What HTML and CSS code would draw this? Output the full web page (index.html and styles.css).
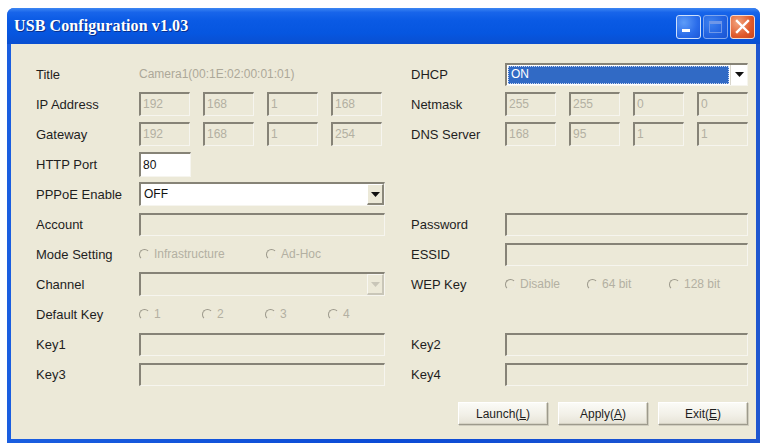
FILE: index.html
```html
<!DOCTYPE html>
<html>
<head>
<meta charset="utf-8">
<title>USB Configuration v1.03</title>
<link rel="stylesheet" href="styles.css">
</head>
<body>
<div class="window">
  <div class="titlebar">
    <span class="title">USB Configuration v1.03</span>
    <div class="caption-btns">
      <span class="cbtn cmin"><svg width="25" height="24" viewBox="0 0 25 24"><rect x="6" y="14" width="8" height="3" fill="#fff"/></svg></span>
      <span class="cbtn cmax"><svg width="25" height="24" viewBox="0 0 25 24"><rect x="6.5" y="6.5" width="12" height="11" fill="none" stroke="#6f97e8" stroke-width="1"/><rect x="6" y="6" width="13" height="3" fill="#6f97e8"/></svg></span>
      <span class="cbtn cclose"><svg width="25" height="24" viewBox="0 0 25 24"><path d="M7 6 L18 17 M18 6 L7 17" stroke="#fff" stroke-width="2.4" stroke-linecap="square"/></svg></span>
    </div>
  </div>
  <div class="client">
    <div class="form">
      <div class="row">
        <span class="lbl">Title</span>
        <span class="static">Camera1(00:1E:02:00:01:01)</span>
        <span></span>
        <span class="lbl">DHCP</span>
        <div class="combo focus">
          <span class="combo-val sel">ON</span>
          <span class="arrow white"><svg width="9" height="5" viewBox="0 0 9 5"><path d="M0 0 H9 L4.5 5 Z" fill="#111"/></svg></span>
        </div>
      </div>
      <div class="row">
        <span class="lbl">IP Address</span>
        <div class="quad"><span class="tb">192</span><span class="tb">168</span><span class="tb">1</span><span class="tb">168</span></div>
        <span></span>
        <span class="lbl">Netmask</span>
        <div class="quad"><span class="tb">255</span><span class="tb">255</span><span class="tb">0</span><span class="tb">0</span></div>
      </div>
      <div class="row">
        <span class="lbl">Gateway</span>
        <div class="quad"><span class="tb">192</span><span class="tb">168</span><span class="tb">1</span><span class="tb">254</span></div>
        <span></span>
        <span class="lbl">DNS Server</span>
        <div class="quad"><span class="tb">168</span><span class="tb">95</span><span class="tb">1</span><span class="tb">1</span></div>
      </div>
      <div class="row">
        <span class="lbl">HTTP Port</span>
        <div class="port-wrap"><span class="tb enabled port">80</span></div>
      </div>
      <div class="row">
        <span class="lbl">PPPoE Enable</span>
        <div class="combo">
          <span class="combo-val">OFF</span>
          <span class="arrow btnface"><svg width="9" height="5" viewBox="0 0 9 5"><path d="M0 0 H9 L4.5 5 Z" fill="#111"/></svg></span>
        </div>
      </div>
      <div class="row">
        <span class="lbl">Account</span>
        <span class="tb wide"></span>
        <span></span>
        <span class="lbl">Password</span>
        <span class="tb wide"></span>
      </div>
      <div class="row">
        <span class="lbl">Mode Setting</span>
        <div class="radios mode">
          <span class="radio"><span class="dot"></span>Infrastructure</span>
          <span class="radio"><span class="dot"></span>Ad-Hoc</span>
        </div>
        <span></span>
        <span class="lbl">ESSID</span>
        <span class="tb wide"></span>
      </div>
      <div class="row">
        <span class="lbl">Channel</span>
        <div class="combo disabled">
          <span class="combo-val"></span>
          <span class="arrow btnface dis"><svg width="9" height="5" viewBox="0 0 9 5"><path d="M0 0 H9 L4.5 5 Z" fill="#c9c6b8"/></svg></span>
        </div>
        <span></span>
        <span class="lbl">WEP Key</span>
        <div class="radios wep">
          <span class="radio"><span class="dot"></span>Disable</span>
          <span class="radio"><span class="dot"></span>64 bit</span>
          <span class="radio"><span class="dot"></span>128 bit</span>
        </div>
      </div>
      <div class="row">
        <span class="lbl">Default Key</span>
        <div class="radios keys">
          <span class="radio"><span class="dot"></span>1</span>
          <span class="radio"><span class="dot"></span>2</span>
          <span class="radio"><span class="dot"></span>3</span>
          <span class="radio"><span class="dot"></span>4</span>
        </div>
      </div>
      <div class="row">
        <span class="lbl">Key1</span>
        <span class="tb wide"></span>
        <span></span>
        <span class="lbl">Key2</span>
        <span class="tb wide"></span>
      </div>
      <div class="row">
        <span class="lbl">Key3</span>
        <span class="tb wide"></span>
        <span></span>
        <span class="lbl">Key4</span>
        <span class="tb wide"></span>
      </div>
    </div>
    <div class="actions">
      <button class="btn">Launch(<u>L</u>)</button>
      <button class="btn">Apply(<u>A</u>)</button>
      <button class="btn">Exit(<u>E</u>)</button>
    </div>
  </div>
</div>
</body>
</html>
```
FILE: styles.css
```css
html, body {
  margin: 0;
  padding: 0;
  background: #ffffff;
}
body {
  font-family: "Liberation Sans", Arial, sans-serif;
  font-size: 13px;
  color: #1c1c1c;
}
.window {
  margin: 8px 0 0 7px;
  width: 753px;
  height: 435px;
  display: flex;
  flex-direction: column;
  border-radius: 7px 7px 0 0;
  background: linear-gradient(90deg, #1a5ee0, #0b4bd6 50%, #1f56cf);
  overflow: hidden;
}
.titlebar {
  height: 36px;
  flex: none;
  display: flex;
  align-items: center;
  justify-content: space-between;
  padding: 0 5px 0 7px;
  background: linear-gradient(180deg, #3d86f2 0%, #1865ea 12%, #0a5ae4 35%, #0656e0 70%, #0a4fd0 100%);
}
.title {
  font-family: "Liberation Serif", "Times New Roman", serif;
  font-weight: bold;
  font-size: 16px;
  color: #ffffff;
  text-shadow: 1px 1px 0 #0a2f8c;
  letter-spacing: 0.1px;
}
.caption-btns {
  display: flex;
  gap: 2px;
  margin-top: 2px;
}
.cbtn {
  width: 25px;
  height: 24px;
  box-sizing: border-box;
  border: 1px solid #ffffff;
  border-radius: 3px;
  display: block;
  overflow: hidden;
}
.cbtn svg {
  display: block;
  margin: -1px;
}
.cmin {
  background: radial-gradient(circle at 30% 30%, #5d9cf8, #2a6cea 60%, #1c58d8);
  border-color: #cfe0fb;
}
.cmax {
  background: radial-gradient(circle at 30% 30%, #3f82ef, #2262e0 60%, #1a54d2);
  border-color: #7fa6ee;
}
.cclose {
  background: radial-gradient(circle at 30% 30%, #f2a57e, #e05a2c 60%, #c7441d);
  border-color: #f7d9cc;
}
.client {
  flex: 1;
  margin: 0 4px 4px 4px;
  background: #ece9d8;
  padding: 18px 8px 0 25px;
  display: flex;
  flex-direction: column;
}
.form {
  display: flex;
  flex-direction: column;
  gap: 6px;
}
.row {
  display: grid;
  grid-template-columns: 103px 246px 26px 94px 243px;
  height: 24px;
  align-items: center;
}
.lbl {
  white-space: nowrap;
  color: #1e1e1e;
}
.static {
  font-size: 12px;
  color: #aca899;
  white-space: nowrap;
}
.quad {
  display: flex;
  justify-content: space-between;
  width: 243px;
}
.tb {
  display: block;
  box-sizing: border-box;
  height: 24px;
  width: 51px;
  border-style: solid;
  border-width: 2px 1px 1px 2px;
  border-color: #868377 #f6f5ef #f6f5ef #868377;
  background: #ece9d8;
  color: #b3b0a2;
  font-size: 12px;
  line-height: 20px;
  padding-left: 2px;
  overflow: hidden;
}
.tb.wide {
  width: 100%;
  height: 23px;
}
.tb.enabled {
  background: #ffffff;
  color: #111111;
}
.tb.port {
  width: 52px;
  height: 25px;
  line-height: 22px;
}
.combo {
  box-sizing: border-box;
  height: 24px;
  width: 100%;
  border-style: solid;
  border-width: 2px 1px 1px 2px;
  border-color: #868377 #f6f5ef #f6f5ef #868377;
  background: #ffffff;
  display: flex;
  align-items: stretch;
}
.row .combo.focus {
  height: 23px;
}
.combo.disabled {
  background: #ece9d8;
}
.combo-val {
  flex: 1;
  font-size: 12px;
  line-height: 20px;
  padding-left: 3px;
  color: #111;
}
.combo-val.sel {
  background: #316ac5;
  color: #ffffff;
  margin: 1px;
  line-height: 17px;
  outline: 1px dotted #c8d6ef;
  outline-offset: -1px;
}
.arrow {
  width: 17px;
  display: flex;
  align-items: center;
  justify-content: center;
  box-sizing: border-box;
}
.arrow.btnface {
  background: #ece9d8;
  border-style: solid;
  border-width: 1px 2px 2px 1px;
  border-color: #ffffff #8b887b #8b887b #ffffff;
}
.arrow.btnface.dis {
  border-color: #f8f7f1 #c9c6b8 #c9c6b8 #f8f7f1;
}
.arrow.white {
  background: #ffffff;
  border-left: 1px solid #d8d6cc;
}
.radios {
  display: grid;
  align-items: center;
  color: #b3b0a2;
  font-size: 12px;
}
.radios.mode {
  grid-template-columns: 127px auto;
}
.radios.keys {
  grid-template-columns: repeat(4, 63px);
}
.radios.wep {
  grid-template-columns: repeat(3, 82px);
}
.radio {
  display: flex;
  align-items: center;
  gap: 4px;
  white-space: nowrap;
}
.dot {
  width: 11px;
  height: 11px;
  box-sizing: border-box;
  border-radius: 50%;
  border: 1.5px solid;
  border-color: #9c998c #ebe9df #ebe9df #9c998c;
}
.actions {
  display: flex;
  justify-content: flex-end;
  gap: 10px;
  margin-top: 16px;
}
.btn {
  width: 90px;
  height: 23px;
  box-sizing: border-box;
  border-style: solid;
  border-width: 1px;
  border-color: #ffffff #9d9a8c #9d9a8c #ffffff;
  box-shadow: 1px 1px 0 #d0cdbf, inset -1px -1px 0 #d6d3c5;
  background: linear-gradient(180deg, #fbfbf7 0%, #f1efe6 60%, #e6e3d6 100%);
  font-family: "Liberation Sans", Arial, sans-serif;
  font-size: 12px;
  color: #1e1e1e;
  padding: 0;
}
```
